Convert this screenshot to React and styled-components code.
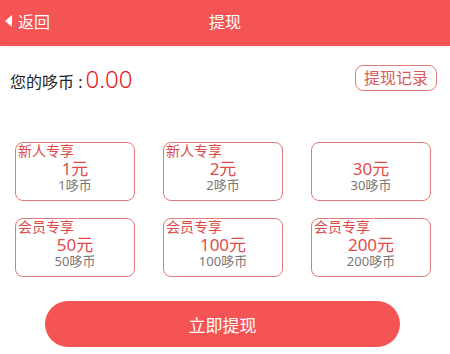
import React from "react";
import styled, { createGlobalStyle } from "styled-components";

const GlobalStyle = createGlobalStyle`
  html, body {
    margin: 0;
    padding: 0;
    background: #fff;
    font-family: "Noto Sans", "Noto Sans CJK SC", sans-serif;
  }
`;

const options = [
  { tag: "新人专享", amount: 1 },
  { tag: "新人专享", amount: 2 },
  { tag: "", amount: 30 },
  { tag: "会员专享", amount: 50 },
  { tag: "会员专享", amount: 100 },
  { tag: "会员专享", amount: 200 },
];

const App = () => {
  return (
    <Page>
      <GlobalStyle />
      <Header>
        <Back>
          <Triangle />
          返回
        </Back>
        <Title>提现</Title>
      </Header>
      <BalanceRow>
        <Label>
          您的哆币 : <Amount>0.00</Amount>
        </Label>
        <RecordButton>提现记录</RecordButton>
      </BalanceRow>
      <Grid>
        {options.map((o, i) => (
          <Card key={i}>
            {o.tag && <Tag>{o.tag}</Tag>}
            <Money>{o.amount}元</Money>
            <Coins>{o.amount}哆币</Coins>
          </Card>
        ))}
      </Grid>
      <Footer>
        <Submit>立即提现</Submit>
      </Footer>
    </Page>
  );
};

export default App;

const Page = styled.div`
  width: 450px;
  height: 354px;
  overflow: hidden;
`;
const Header = styled.div`
  position: relative;
  height: 46px;
  background-color: #f55454;
  display: flex;
  align-items: center;
  justify-content: center;
  color: #fff;
  box-shadow: 0 1px 2px rgba(0, 0, 0, 0.08);
`;
const Back = styled.div`
  position: absolute;
  left: 5px;
  top: 0;
  height: 42px;
  display: flex;
  align-items: center;
  gap: 6px;
  font-size: 16px;
`;
const Triangle = styled.span`
  width: 0;
  height: 0;
  border-top: 6px solid transparent;
  border-bottom: 6px solid transparent;
  border-right: 7px solid #fff;
`;
const Title = styled.div`
  font-size: 16px;
  margin-top: -5px;
`;
const BalanceRow = styled.div`
  display: flex;
  align-items: center;
  justify-content: space-between;
  padding: 17px 13px 0 10px;
  height: 30px;
`;
const Label = styled.div`
  font-size: 16px;
  color: #222;
  display: flex;
  align-items: baseline;
  gap: 3px;
`;
const Amount = styled.span`
  font-size: 24px;
  font-weight: 300;
  color: #e3161b;
`;
const RecordButton = styled.div`
  border: 1.5px solid #e07878;
  border-radius: 8px;
  color: #d95c5c;
  font-size: 16px;
  padding: 0 8px;
  height: 24px;
  line-height: 24px;
`;
const Grid = styled.div`
  display: grid;
  grid-template-columns: repeat(3, 120px);
  column-gap: 28px;
  row-gap: 17px;
  padding: 49px 0 0 15px;
`;
const Card = styled.div`
  position: relative;
  box-sizing: border-box;
  height: 59px;
  border: 1.5px solid #e07a7a;
  border-radius: 8px;
  display: flex;
  flex-direction: column;
  align-items: center;
  padding-top: 17px;
`;
const Tag = styled.div`
  position: absolute;
  left: 2px;
  top: 0;
  font-size: 14px;
  line-height: 15px;
  color: #dc4a4a;
`;
const Money = styled.div`
  font-size: 17px;
  color: #e04c4c;
  line-height: 18px;
`;
const Coins = styled.div`
  font-size: 13px;
  color: #777;
  line-height: 15px;
`;
const Footer = styled.div`
  padding: 24px 0 0 45px;
`;
const Submit = styled.div`
  width: 355px;
  height: 46px;
  border-radius: 23px;
  background-color: #f55454;
  color: #fff;
  font-size: 17px;
  display: flex;
  align-items: center;
  justify-content: center;
`;
